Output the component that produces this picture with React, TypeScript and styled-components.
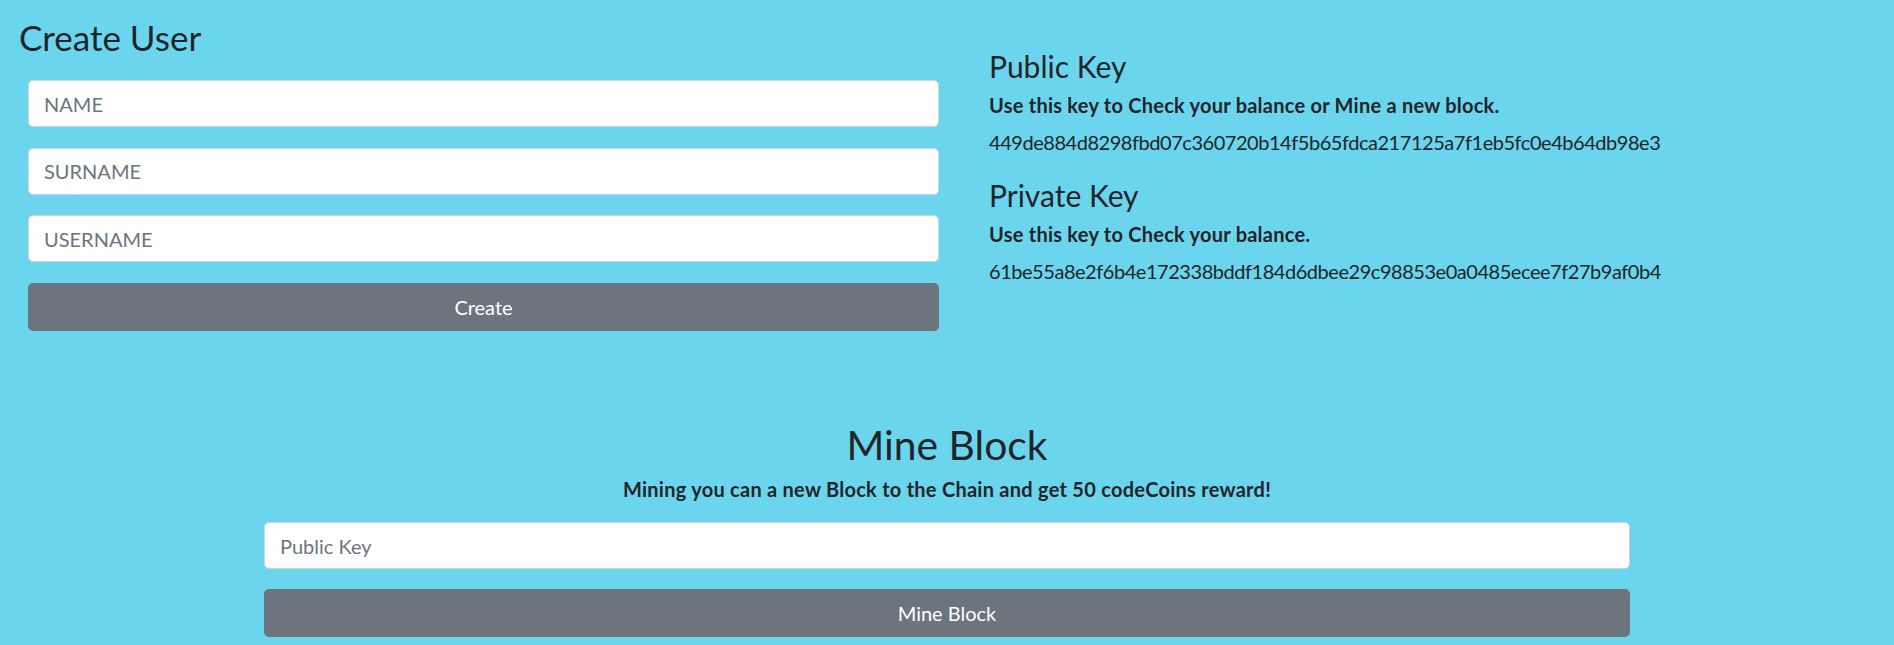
import React from 'react';
import styled, { createGlobalStyle } from 'styled-components';

const FONT = `Lato, "Open Sans", sans-serif`;

const Global = createGlobalStyle`
  html, body { margin: 0; padding: 0; background: #6cd5ee; }
  body { font-family: ${FONT}; color: #212529; }
  * { box-sizing: border-box; }
`;

const Page = styled.div`
  width: 1894px;
  min-height: 645px;
  background: #6cd5ee;
`;

const TopRow = styled.div`
  display: grid;
  grid-template-columns: 947px 947px;
`;

const LeftCol = styled.section`
  padding: 16px 8px 0 19px;
`;

const Title = styled.h3`
  margin: 0;
  font-size: 35px;
  font-weight: 400;
  line-height: 42px;
`;

const Form = styled.form`
  display: flex;
  flex-direction: column;
  gap: 20.5px;
  margin: 22px 0 0 9px;
`;

const Input = styled.input`
  display: block;
  width: 100%;
  height: 47px;
  padding: 0 15px;
  font-family: ${FONT};
  font-size: 20px;
  color: #495057;
  background: #fff;
  border: 1px solid #ced4da;
  border-radius: 5px;
  outline: none;
  &::placeholder { color: #6c757d; }
`;

const Button = styled.button`
  display: block;
  width: 100%;
  height: 48px;
  font-family: ${FONT};
  font-size: 20px;
  color: #fff;
  background: #6c757d;
  border: none;
  border-radius: 5px;
  cursor: pointer;
`;

const RightCol = styled.section`
  padding: 48px 0 0 42px;
  display: flex;
  flex-direction: column;
  gap: 20px;
`;

const KeyBlock = styled.div``;

const KeyTitle = styled.h4`
  margin: 0 0 6px;
  font-size: 30px;
  font-weight: 400;
  line-height: 36px;
`;

const KeyDesc = styled.p`
  margin: 0 0 7px;
  font-size: 20px;
  font-weight: 700;
  letter-spacing: 0.24px;
  line-height: 30px;
`;

const KeyValue = styled.p`
  margin: 0;
  font-size: 20px;
  font-weight: 400;
  letter-spacing: -0.46px;
  line-height: 30px;
`;

const MineSection = styled.section`
  width: 1366px;
  margin: 90.5px auto 0;
  text-align: center;
`;

const MineTitle = styled.h2`
  margin: 0 0 5px;
  font-size: 40.8px;
  font-weight: 400;
  line-height: 48px;
`;

const MineText = styled.p`
  margin: 0 0 18px;
  font-size: 20px;
  font-weight: 700;
  letter-spacing: 0.26px;
  line-height: 30px;
`;

const MineForm = styled.form`
  display: flex;
  flex-direction: column;
  gap: 20px;
`;

export default function App() {
  return (
    <Page>
      <Global />
      <TopRow>
        <LeftCol>
          <Title>Create User</Title>
          <Form onSubmit={(e) => e.preventDefault()}>
            <Input placeholder="NAME" />
            <Input placeholder="SURNAME" />
            <Input placeholder="USERNAME" />
            <Button type="submit">Create</Button>
          </Form>
        </LeftCol>
        <RightCol>
          <KeyBlock>
            <KeyTitle>Public Key</KeyTitle>
            <KeyDesc>Use this key to Check your balance or Mine a new block.</KeyDesc>
            <KeyValue>449de884d8298fbd07c360720b14f5b65fdca217125a7f1eb5fc0e4b64db98e3</KeyValue>
          </KeyBlock>
          <KeyBlock>
            <KeyTitle>Private Key</KeyTitle>
            <KeyDesc>Use this key to Check your balance.</KeyDesc>
            <KeyValue>61be55a8e2f6b4e172338bddf184d6dbee29c98853e0a0485ecee7f27b9af0b4</KeyValue>
          </KeyBlock>
        </RightCol>
      </TopRow>
      <MineSection>
        <MineTitle>Mine Block</MineTitle>
        <MineText>Mining you can a new Block to the Chain and get 50 codeCoins reward!</MineText>
        <MineForm onSubmit={(e) => e.preventDefault()}>
          <Input placeholder="Public Key" />
          <Button type="submit">Mine Block</Button>
        </MineForm>
      </MineSection>
    </Page>
  );
}
